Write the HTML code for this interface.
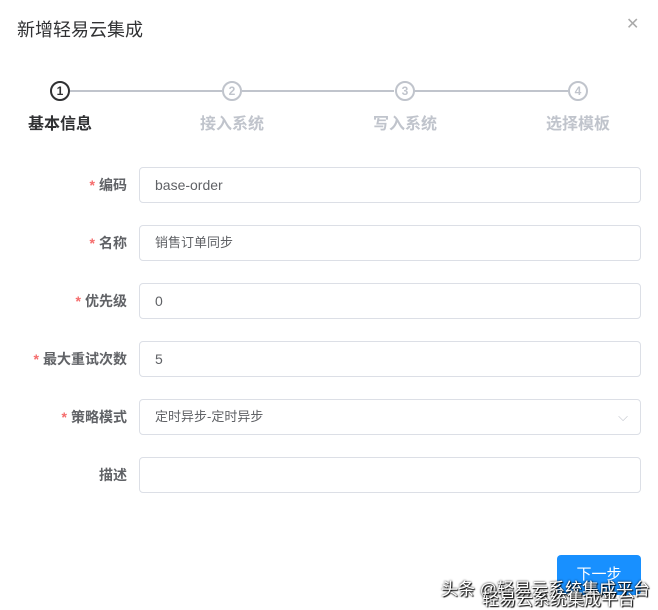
<html><head><style>
body{margin:0;width:658px;height:609px;background:#fff;font-family:"Liberation Sans","Noto Sans CJK SC",sans-serif;position:relative;overflow:hidden}
.t{position:absolute;left:17px;top:16px;font-size:18px;color:#303133}
.x{position:absolute;left:626px;top:14px;font-size:16px;color:#aaa;font-weight:lighter}
.c{position:absolute;top:81px;width:20px;height:20px;border:2px solid #c0c4cc;border-radius:50%;box-sizing:border-box;font-size:12px;color:#c0c4cc;text-align:center;line-height:17px;font-weight:bold;background:#fff}
.ln{position:absolute;top:90px;height:2px;background:#c0c4cc}
.s{position:absolute;top:110px;font-size:16px;color:#c0c4cc;font-weight:bold;width:100px;text-align:center}
.lb{position:absolute;right:531px;font-size:14px;color:#606266;font-weight:bold}
.lb i{color:#f56c6c;font-style:normal;margin-right:4px}
.in{position:absolute;left:139px;width:502px;height:36px;border:1px solid #dcdfe6;border-radius:4px;box-sizing:border-box;padding-left:15px;line-height:34px;font-size:14px;color:#606266}
.btn{position:absolute;left:557px;top:555px;width:84px;height:40px;background:#1890ff;border-radius:4px;color:#fff;font-size:15px;text-align:center;line-height:40px}
.w{position:absolute;font-size:17px;color:#fff;text-shadow:0 0 2px #000,1px 1px 1px #000}
</style></head><body>
<div class="t">新增轻易云集成</div>
<div class="x">✕</div>
<div class="ln" style="left:70px;width:152px"></div>
<div class="ln" style="left:242px;width:152px"></div>
<div class="ln" style="left:414px;width:154px"></div>
<div class="c" style="left:50px;border-color:#303133;color:#303133">1</div>
<div class="c" style="left:222px">2</div>
<div class="c" style="left:395px">3</div>
<div class="c" style="left:568px">4</div>
<div class="s" style="left:10px;color:#303133">基本信息</div>
<div class="s" style="left:182px">接入系统</div>
<div class="s" style="left:355px">写入系统</div>
<div class="s" style="left:528px">选择模板</div>
<div class="lb" style="top:175px"><i>*</i>编码</div><div class="in" style="top:167px">base-order</div>
<div class="lb" style="top:233px"><i>*</i>名称</div><div class="in" style="top:225px;font-size:13px">销售订单同步</div>
<div class="lb" style="top:291px"><i>*</i>优先级</div><div class="in" style="top:283px">0</div>
<div class="lb" style="top:349px"><i>*</i>最大重试次数</div><div class="in" style="top:341px">5</div>
<div class="lb" style="top:407px"><i>*</i>策略模式</div><div class="in" style="top:399px;font-size:13px">定时异步-定时异步<span style="position:absolute;right:12px;color:#c0c4cc">⌵</span></div>
<div class="lb" style="top:465px">描述</div><div class="in" style="top:457px"></div>
<div class="btn">下一步</div>
<div class="w" style="left:441px;top:575px">头条 @轻易云系统集成平台</div>
<div class="w" style="left:482px;top:585px">轻易云系统集成平台</div>
</body></html>
